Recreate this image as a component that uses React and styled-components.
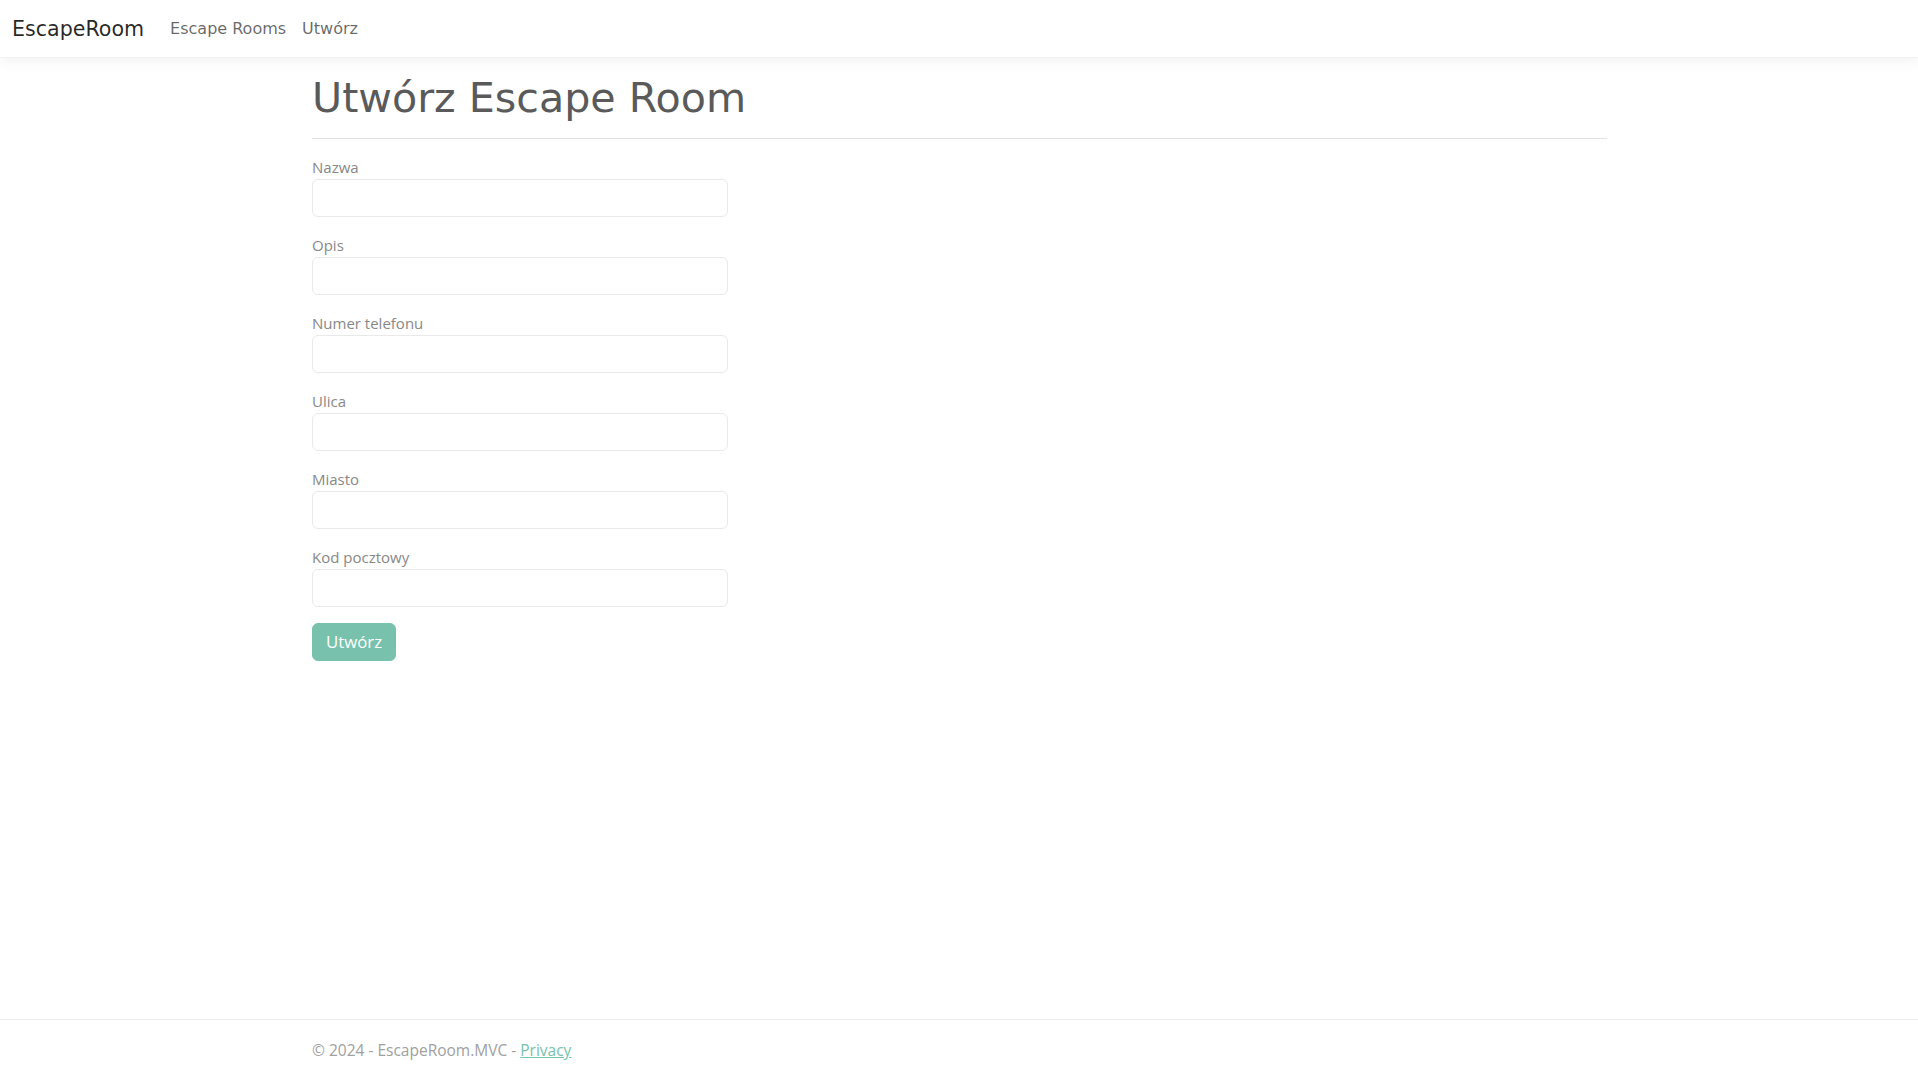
import React from "react";
import styled, { createGlobalStyle } from "styled-components";

const GlobalStyle = createGlobalStyle`
  *, *::before, *::after { box-sizing: border-box; }
  html, body { margin: 0; padding: 0; }
  body {
    font-family: "Open Sans", "Noto Sans", sans-serif;
    font-size: 15px;
    line-height: 24px;
    color: #888;
    background: #fff;
  }
`;

const Page = styled.div`
  display: flex;
  flex-direction: column;
  min-height: 100vh;
`;

const Navbar = styled.header`
  height: 58px;
  display: flex;
  align-items: center;
  padding: 1px 12px 0;
  background: #fff;
  border-bottom: 1px solid #f1f1f1;
  box-shadow: 0 4px 12px rgba(0, 0, 0, 0.05);
  margin-bottom: 16px;
`;

const Brand = styled.a`
  font-family: "DejaVu Sans", sans-serif;
  font-size: 20.6px;
  line-height: 30px;
  color: rgba(0, 0, 0, 0.85);
  text-decoration: none;
  margin-right: 18px;
`;

const NavLinks = styled.nav`
  display: flex;
`;

const NavLink = styled.a`
  font-family: "DejaVu Sans", sans-serif;
  font-size: 16px;
  line-height: 24px;
  padding: 8px;
  color: rgba(0, 0, 0, 0.6);
  text-decoration: none;
`;

const Main = styled.main`
  flex: 1;
  width: 1320px;
  margin: 0 auto;
  padding: 0 12px 0 13px;
`;

const Title = styled.h1`
  margin: 0;
  font-family: "DejaVu Sans", sans-serif;
  font-weight: 400;
  font-size: 41.2px;
  line-height: 48px;
  color: #5a5a5a;
`;

const Rule = styled.hr`
  margin: 16px 0 16px;
  border: 0;
  border-top: 1px solid #e2e2e2;
`;

const Form = styled.form`
  width: 416px;
  display: flex;
  flex-direction: column;
`;

const Group = styled.div`
  display: flex;
  flex-direction: column;
  margin-bottom: 16px;
`;

const Label = styled.label`
  display: block;
  height: 24px;
  line-height: 24px;
  color: #888;
`;

const Input = styled.input`
  display: block;
  width: 100%;
  height: 38px;
  padding: 6px 12px;
  border: 1px solid #e9e9e9;
  border-radius: 6px;
  background: #fff;
  font: inherit;
  color: #5a5a5a;
  outline: none;
`;

const Button = styled.button`
  align-self: flex-start;
  height: 38px;
  padding: 6px 13px;
  border: 1px solid #78c2ad;
  border-radius: 6px;
  background: #78c2ad;
  color: #fff;
  font-family: "Open Sans", "Noto Sans", sans-serif;
  font-size: 16.8px;
  line-height: 24px;
  cursor: pointer;
`;

const Footer = styled.footer`
  border-top: 1px solid #ececec;
  height: 60px;
  line-height: 60px;
`;

const FooterInner = styled.div`
  width: 1320px;
  margin: 0 auto;
  padding: 0 12px 0 13px;
  color: #a0a0a0;
  font-size: 15.5px;
`;

const FooterLink = styled.a`
  color: #78c2ad;
  text-decoration: underline;
`;

const fields = ["Nazwa", "Opis", "Numer telefonu", "Ulica", "Miasto", "Kod pocztowy"];

export default function App() {
  return (
    <>
      <GlobalStyle />
      <Page>
        <Navbar>
          <Brand href="#">EscapeRoom</Brand>
          <NavLinks>
            <NavLink href="#">Escape Rooms</NavLink>
            <NavLink href="#">Utwórz</NavLink>
          </NavLinks>
        </Navbar>
        <Main>
          <Title>Utwórz Escape Room</Title>
          <Rule />
          <Form onSubmit={(e) => e.preventDefault()}>
            {fields.map((f) => (
              <Group key={f}>
                <Label>{f}</Label>
                <Input type="text" />
              </Group>
            ))}
            <Button type="submit">Utwórz</Button>
          </Form>
        </Main>
        <Footer>
          <FooterInner>
            © 2024 - EscapeRoom.MVC - <FooterLink href="#">Privacy</FooterLink>
          </FooterInner>
        </Footer>
      </Page>
    </>
  );
}
